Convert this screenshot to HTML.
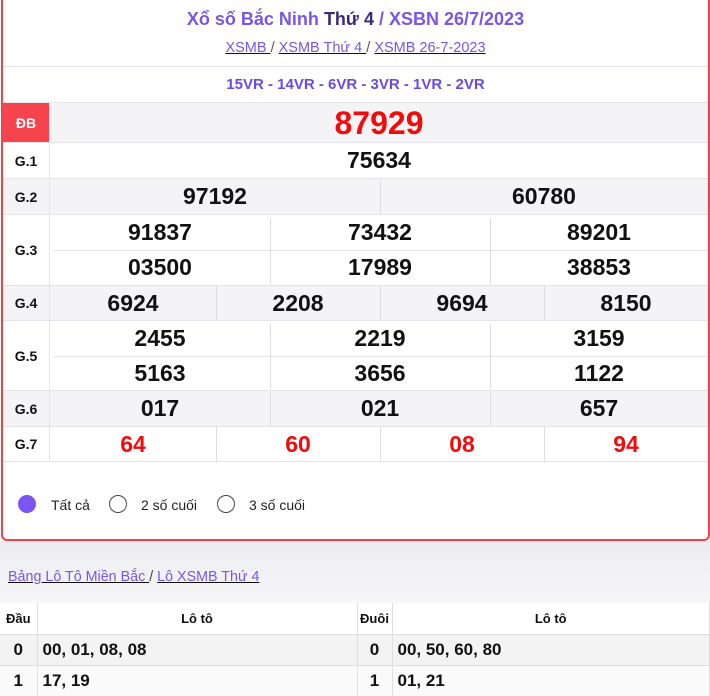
<!DOCTYPE html>
<html><head><meta charset="utf-8"><style>
*{box-sizing:border-box;margin:0;padding:0}
body{width:710px;height:694px;overflow:hidden;background:#fff;font-family:"Liberation Sans",Arial,sans-serif;color:#111}
.card{position:absolute;left:1px;top:-4px;width:709px;height:545px;border:2px solid #f2424c;border-radius:0 0 6px 6px;background:#fff}
.title{position:absolute;top:11px;width:100%;text-align:center;font-size:18px;font-weight:bold;color:#7a55e6}
.title b{color:#362a7a}
.crumb{position:absolute;top:42px;width:100%;text-align:center;font-size:14.5px;color:#555}
.crumb a{color:#7a55e6;text-decoration:underline;text-decoration-color:#111}
.codes{position:absolute;top:66px;left:3px;right:2px;height:36px;border-top:1px solid #e3e3ea;text-align:center;font-size:15px;font-weight:bold;color:#6a4be0;line-height:36px}
.row{position:absolute;left:3px;right:2px;border-top:1px solid #e3e3ea}
.lab{position:absolute;left:0;top:0;bottom:0;width:47px;border-right:1px solid #e3e3ea;font-size:14px;font-weight:bold;display:flex;align-items:center;justify-content:center}
.cell{position:absolute;font-size:23px;font-weight:bold;text-align:center;height:35px;line-height:35px}
.g{background:#f4f4f6}
.vl{position:absolute;width:1px;background:#dcdce4}
.hl{position:absolute;height:1px;background:#e3e3ea}
.red{color:#f30b0b}
.radio{position:absolute;top:497px;font-size:14px;color:#222}
.rc{position:absolute;width:18px;height:18px;border-radius:50%;border:1px solid #444;top:-2px}
.bot{position:absolute;left:0;top:541px;width:710px;height:63px;background:linear-gradient(#ececf0,#f7f7fa)}
table{position:absolute;top:603px;left:0;width:710px;border-collapse:collapse;font-size:17px;font-weight:bold}
td{border-right:1px solid #e0e0e0;height:31px;padding-left:5px}
tr.h td{font-size:13px;text-align:center;padding:0;background:#fff}
tr.a td{background:#f3f3f3;border-top:1px solid #ddd}
tr.b td{background:#fafafa;border-top:1px solid #ddd}
</style></head><body>
<div class="card">
<div class="title">Xổ số Bắc Ninh <b>Thứ 4</b> / XSBN 26/7/2023</div>
<div class="crumb"><a>XSMB </a> / <a>XSMB Thứ 4 </a> / <a>XSMB 26-7-2023</a></div>
</div>
<div class="codes">15VR - 14VR - 6VR - 3VR - 1VR - 2VR</div>

<div class="row g" style="top:102px;height:40px"><div class="lab" style="background:#f5444e;color:#fff">ĐB</div><div class="cell red" style="left:47px;right:0;font-size:32px;height:40px;line-height:40px">87929</div></div>
<div class="row" style="top:142px;height:36px"><div class="lab">G.1</div><div class="cell" style="left:47px;right:0">75634</div></div>
<div class="row g" style="top:178px;height:36px"><div class="lab">G.2</div><div class="cell" style="left:47px;width:330px">97192</div><div class="vl" style="left:377px;top:0;height:35px"></div><div class="cell" style="left:377px;right:0">60780</div></div>
<div class="row" style="top:214px;height:71px"><div class="lab">G.3</div>
<div class="cell" style="left:47px;width:220px">91837</div><div class="cell" style="left:267px;width:220px">73432</div><div class="cell" style="left:487px;right:0">89201</div>
<div class="hl" style="left:50px;right:0;top:35px"></div>
<div class="cell" style="left:47px;width:220px;top:35px">03500</div><div class="cell" style="left:267px;width:220px;top:35px">17989</div><div class="cell" style="left:487px;right:0;top:35px">38853</div>
<div class="vl" style="left:267px;top:3px;height:66px"></div><div class="vl" style="left:487px;top:3px;height:66px"></div></div>
<div class="row g" style="top:285px;height:35px"><div class="lab">G.4</div>
<div class="cell" style="left:47px;width:166px">6924</div><div class="cell" style="left:213px;width:164px">2208</div><div class="cell" style="left:377px;width:164px">9694</div><div class="cell" style="left:541px;right:0">8150</div>
<div class="vl" style="left:213px;top:0;height:35px"></div><div class="vl" style="left:377px;top:0;height:35px"></div><div class="vl" style="left:541px;top:0;height:35px"></div></div>
<div class="row" style="top:320px;height:70px"><div class="lab">G.5</div>
<div class="cell" style="left:47px;width:220px">2455</div><div class="cell" style="left:267px;width:220px">2219</div><div class="cell" style="left:487px;right:0">3159</div>
<div class="hl" style="left:50px;right:0;top:35px"></div>
<div class="cell" style="left:47px;width:220px;top:35px">5163</div><div class="cell" style="left:267px;width:220px;top:35px">3656</div><div class="cell" style="left:487px;right:0;top:35px">1122</div>
<div class="vl" style="left:267px;top:3px;height:64px"></div><div class="vl" style="left:487px;top:3px;height:64px"></div></div>
<div class="row g" style="top:390px;height:36px"><div class="lab">G.6</div>
<div class="cell" style="left:47px;width:220px">017</div><div class="cell" style="left:267px;width:220px">021</div><div class="cell" style="left:487px;right:0">657</div>
<div class="vl" style="left:267px;top:0;height:35px"></div><div class="vl" style="left:487px;top:0;height:35px"></div></div>
<div class="row" style="top:426px;height:36px;border-bottom:1px solid #e3e3ea"><div class="lab">G.7</div>
<div class="cell red" style="left:47px;width:166px">64</div><div class="cell red" style="left:213px;width:164px">60</div><div class="cell red" style="left:377px;width:164px">08</div><div class="cell red" style="left:541px;right:0">94</div>
<div class="vl" style="left:213px;top:0;height:35px"></div><div class="vl" style="left:377px;top:0;height:35px"></div><div class="vl" style="left:541px;top:0;height:35px"></div></div>

<div class="radio" style="left:18px"><span class="rc" style="left:0;background:#7c55f0;border-color:#7c55f0"></span><span style="position:absolute;left:33px;white-space:nowrap">Tất cả</span></div>
<div class="radio" style="left:109px"><span class="rc" style="left:0"></span><span style="position:absolute;left:32px;white-space:nowrap">2 số cuối</span></div>
<div class="radio" style="left:217px"><span class="rc" style="left:0"></span><span style="position:absolute;left:32px;white-space:nowrap">3 số cuối</span></div>

<div class="bot"><div style="position:absolute;left:8px;top:28px;font-size:14.3px;color:#444"><a style="color:#7a55e6;text-decoration:underline;text-decoration-color:#111">Bảng Lô Tô Miền Bắc </a> / <a style="color:#7a55e6;text-decoration:underline;text-decoration-color:#111">Lô XSMB Thứ 4</a></div></div>
<table>
<colgroup><col style="width:37px"><col style="width:320px"><col style="width:35px"><col></colgroup>
<tr class="h"><td>Đầu</td><td>Lô tô</td><td>Đuôi</td><td>Lô tô</td></tr>
<tr class="a"><td style="text-align:center;padding:0">0</td><td>00, 01, 08, 08</td><td style="text-align:center;padding:0">0</td><td>00, 50, 60, 80</td></tr>
<tr class="b"><td style="text-align:center;padding:0">1</td><td>17, 19</td><td style="text-align:center;padding:0">1</td><td>01, 21</td></tr>
</table>
</body></html>
